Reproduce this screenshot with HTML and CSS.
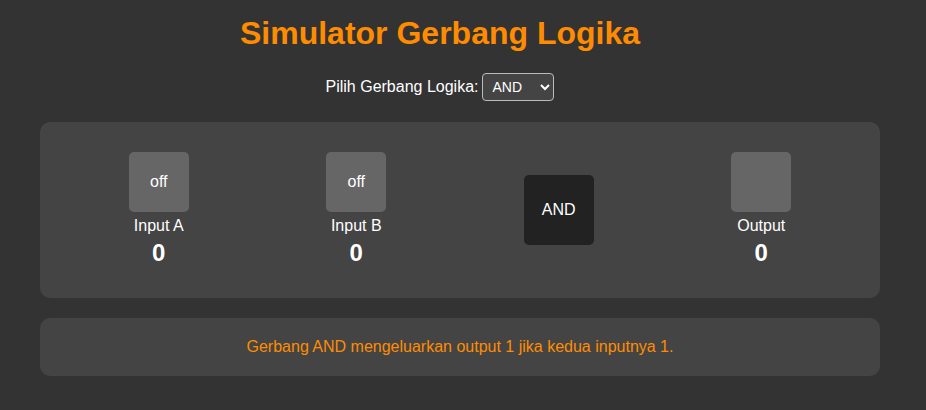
FILE: index.html
```html
<!DOCTYPE html>
<html lang="id">
<head>
<meta charset="utf-8">
<title>Simulator Gerbang Logika</title>
<link rel="stylesheet" href="styles.css">
</head>
<body>
<div class="app">
  <h1 class="title">Simulator Gerbang Logika</h1>
  <div class="controls">
    <label class="controls-label" for="gate">Pilih Gerbang Logika:</label>
    <select id="gate" class="gate-select">
      <option selected>AND</option>
      <option>OR</option>
      <option>NOT</option>
      <option>NAND</option>
      <option>NOR</option>
      <option>XOR</option>
    </select>
  </div>
  <div class="card circuit">
    <div class="node">
      <div class="switch">off</div>
      <div class="node-label">Input A</div>
      <div class="node-value">0</div>
    </div>
    <div class="node">
      <div class="switch">off</div>
      <div class="node-label">Input B</div>
      <div class="node-value">0</div>
    </div>
    <div class="gate">AND</div>
    <div class="node">
      <div class="switch"></div>
      <div class="node-label">Output</div>
      <div class="node-value">0</div>
    </div>
  </div>
  <div class="card info">Gerbang AND mengeluarkan output 1 jika kedua inputnya 1.</div>
</div>
</body>
</html>
```
FILE: styles.css
```css
html, body {
  margin: 0;
  padding: 0;
  background: #333333;
}
body {
  font-family: "Liberation Sans", Arial, sans-serif;
  color: #ffffff;
}
.app {
  width: 880px;
  padding-top: 15px;
}
.title {
  margin: 0 0 21px;
  font-size: 32px;
  line-height: 37px;
  font-weight: bold;
  color: #ff8c00;
  text-align: center;
}
.controls {
  display: flex;
  justify-content: center;
  align-items: center;
  gap: 4px;
  height: 28px;
  font-size: 16px;
}
.gate-select {
  width: 72px;
  height: 28px;
  font-family: "Liberation Sans", Arial, sans-serif;
  font-size: 14px;
  color: #ffffff;
  background: #444444;
  border: 1px solid #bbbbbb;
  border-radius: 4px;
  padding: 0 4px 0 5px;
}
.card {
  margin: 21px 0 0 40px;
  width: 840px;
  box-sizing: border-box;
  background: #444444;
  border-radius: 10px;
}
.circuit {
  height: 176px;
  padding: 0 20px;
  display: flex;
  justify-content: space-around;
  align-items: center;
}
.node {
  display: flex;
  flex-direction: column;
  align-items: center;
  width: 60px;
  margin-bottom: 2px;
}
.switch {
  width: 60px;
  height: 60px;
  background: #666666;
  border-radius: 5px;
  display: flex;
  align-items: center;
  justify-content: center;
  font-size: 16px;
}
.node-label {
  margin-top: 5px;
  font-size: 16px;
  line-height: 18px;
  white-space: nowrap;
}
.node-value {
  margin-top: 4px;
  font-size: 24px;
  line-height: 28px;
  font-weight: bold;
}
.gate {
  width: 70px;
  height: 70px;
  background: #222222;
  border-radius: 5px;
  display: flex;
  align-items: center;
  justify-content: center;
  font-size: 16px;
}
.info {
  margin-top: 20px;
  padding: 20px;
  font-size: 16px;
  line-height: 18px;
  color: #ff8c00;
  text-align: center;
}
```
